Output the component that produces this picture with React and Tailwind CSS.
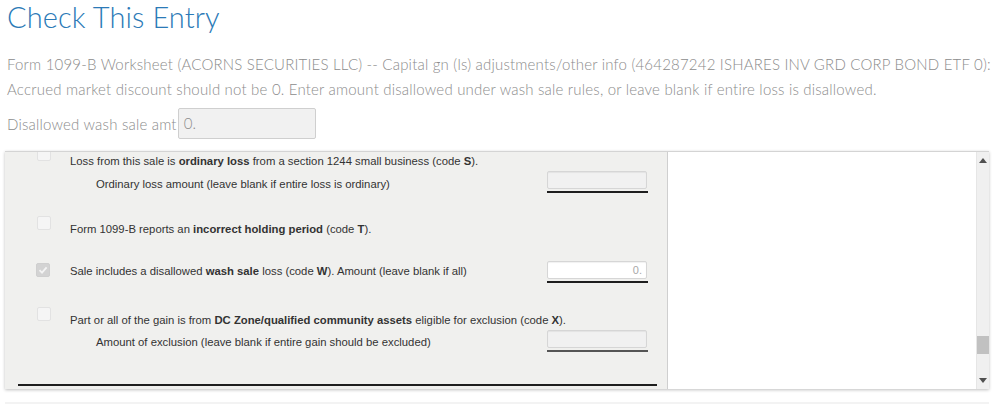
import React from "react";

function Box({ checked, className = "" }) {
  return (
    <div
      className={
        "w-[14px] h-[14px] shrink-0 rounded-[2px] border flex items-center justify-center " +
        (checked ? "bg-[#d3d3d3] border-[#cfcfcf] " : "bg-[#f5f5f5] border-[#e2e2e2] ") +
        className
      }
    >
      {checked && (
        <svg width="10" height="10" viewBox="0 0 10 10">
          <path d="M1.5 5.2 L4 7.6 L8.6 2.4" fill="none" stroke="#f4f4f4" strokeWidth="1.8" />
        </svg>
      )}
    </div>
  );
}

function Field({ value, white, line = "bg-[#1e1e1e]" }) {
  return (
    <div className="flex flex-col w-[100px]">
      <div
        className={
          "h-[18px] w-[100px] border border-[#d6d6d6] rounded-[2px] shadow-[inset_0_1px_1px_rgba(0,0,0,0.06)] text-right pr-[4px] text-[11px] leading-[16px] text-[#a8a8a8] " +
          (white ? "bg-white" : "bg-[#f1f1f1]")
        }
      >
        {value}
      </div>
      <div className={"h-[2px] mt-[2px] w-[101px] " + line}></div>
    </div>
  );
}

export default function App() {
  return (
    <div className="w-[998px] h-[409px] bg-white overflow-hidden" style={{ fontFamily: "Lato, 'Open Sans', sans-serif" }}>
      <div className="pl-[7px] pt-0 text-[29px] leading-[34px] font-light text-[#2b7ab7] tracking-[0.1px]">Check This Entry</div>
      <div className="pl-[7px] mt-[18px] text-[15px] leading-[25px] font-light text-[#8c8c8c] tracking-[0.2px]">
        Form 1099-B Worksheet (ACORNS SECURITIES LLC) -- Capital gn (ls) adjustments/other info (464287242 ISHARES INV GRD CORP BOND ETF 0):
        <br />
        Accrued market discount should not be 0. Enter amount disallowed under wash sale rules, or leave blank if entire loss is disallowed.
      </div>
      <div className="pl-[7px] mt-[6px] flex items-center">
        <span className="text-[15px] font-light text-[#8c8c8c] leading-[30px] tracking-[0.2px]">Disallowed wash sale amt</span>
        <div className="ml-[1px] w-[138px] h-[31px] bg-[#f1f1f1] border border-[#cfcfcf] rounded-[2px] text-[15px] font-light text-[#8c8c8c] leading-[29px] pl-[5px]">0.</div>
      </div>

      <div className="ml-[5px] mt-[12px] w-[984px] h-[238px] flex border-t border-[#d4d4d4] shadow-[0_1px_3px_rgba(0,0,0,0.25)] overflow-hidden">
        <div
          className="w-[663px] shrink-0 bg-[#f0f0ee] border-r border-[#cfcfcf] flex flex-col text-[11.3px] text-[#333]"
          style={{ fontFamily: "'Liberation Sans', Arial, sans-serif" }}
        >
          <div className="flex items-start mt-[2px] h-[14px]">
            <Box className="ml-[32px] -mt-[7px]" />
            <span className="ml-[19px] leading-[14px]">
              Loss from this sale is <b>ordinary loss</b> from a section 1244 small business (code <b>S</b>).
            </span>
          </div>
          <div className="flex items-end mt-[3px]">
            <span className="ml-[91px] leading-[14px] mb-[2px]">Ordinary loss amount (leave blank if entire loss is ordinary)</span>
            <div className="ml-auto mr-[20px]">
              <Field />
            </div>
          </div>

          <div className="flex items-start mt-[23px]">
            <Box className="ml-[32px]" />
            <span className="ml-[19px] mt-[6px] leading-[14px]">
              Form 1099-B reports an <b>incorrect holding period</b> (code <b>T</b>).
            </span>
          </div>

          <div className="flex items-start mt-[25px]">
            <Box checked className="ml-[31px] mt-[2px]" />
            <span className="ml-[20px] mt-[3px] leading-[14px]">
              Sale includes a disallowed <b>wash sale</b> loss (code <b>W</b>). Amount (leave blank if all)
            </span>
            <div className="ml-auto mr-[20px]">
              <Field value="0." white />
            </div>
          </div>

          <div className="flex items-start mt-[24px]">
            <Box className="ml-[32px]" />
            <span className="ml-[19px] mt-[6px] leading-[14px]">
              Part or all of the gain is from <b>DC Zone/qualified community assets</b> eligible for exclusion (code <b>X</b>).
            </span>
          </div>
          <div className="flex items-end mt-[3px]">
            <span className="ml-[91px] leading-[14px] mb-[3px]">Amount of exclusion (leave blank if entire gain should be excluded)</span>
            <div className="ml-auto mr-[20px]">
              <Field line="bg-[#555]" />
            </div>
          </div>

          <div className="mt-[32px] ml-[13px] mr-[10px] h-[2px] bg-[#1e1e1e]"></div>
        </div>
        <div className="flex-1 bg-white"></div>
        <div className="w-[13px] shrink-0 bg-[#f0f0f0] border-l border-[#e6e6e6] flex flex-col items-center">
          <svg className="mt-[6px]" width="8" height="5" viewBox="0 0 8 5">
            <path d="M0 5 L4 0 L8 5 Z" fill="#505050" />
          </svg>
          <div className="mt-[173px] w-[12px] h-[18px] bg-[#c1c1c1]"></div>
          <svg className="mt-[24px]" width="8" height="5" viewBox="0 0 8 5">
            <path d="M0 0 L4 5 L8 0 Z" fill="#505050" />
          </svg>
        </div>
      </div>
      <div className="ml-[5px] mt-[13px] w-[984px] h-[2px] bg-[#f3f3f3]"></div>
    </div>
  );
}
